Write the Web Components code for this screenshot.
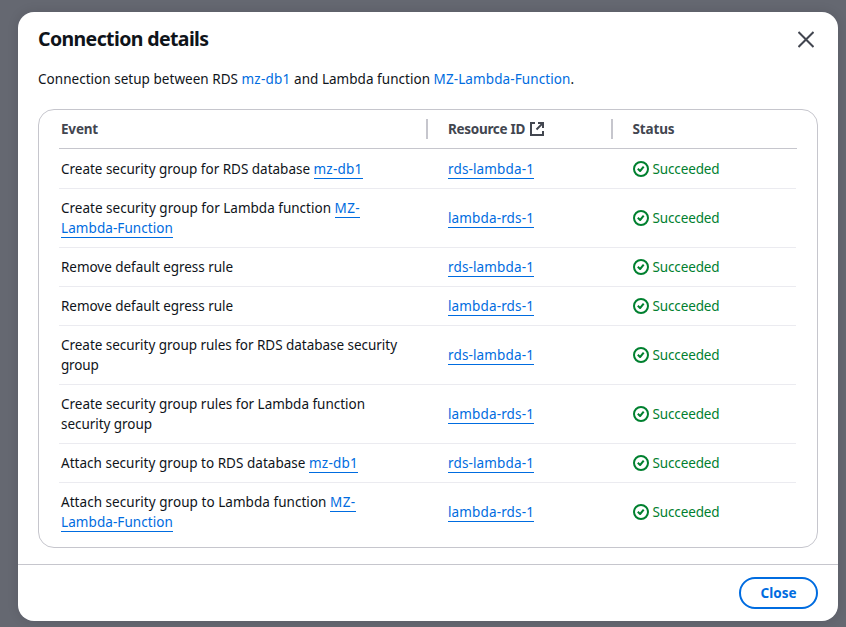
<!DOCTYPE html>
<html lang="en">
<head>
<meta charset="utf-8">
<title>Connection details</title>
<style>
html,body{margin:0;height:100%;overflow:hidden}
body{background:#656871;font:13.5px/20px "Noto Sans","Open Sans",sans-serif;color:#0f141a}
</style>
</head>
<body>
<connection-dialog></connection-dialog>
<script>
// A run of text whose tracking is adjusted to fill the given advance width.
class FitText extends HTMLElement {
  connectedCallback() {
    const root = this.attachShadow({mode:'open'});
    root.innerHTML = `<style>:host{display:inline-block;white-space:pre;line-height:inherit}:host([link]){color:#006ce0}:host([underline]) span{box-shadow:0 1px 0 #006ce0}span{display:inline-block;height:19px;line-height:20px}:host([plain]) span{height:auto;line-height:inherit}</style><span><slot></slot></span>`;
    const w = parseFloat(this.getAttribute('w'));
    const natural = this.getBoundingClientRect().width;
    if (w) this.style.letterSpacing = ((w - natural) / this.textContent.length) + 'px';
  }
}
class StatusOk extends HTMLElement {
  connectedCallback() {
    this.attachShadow({mode:'open'}).innerHTML = `<style>:host{display:flex;align-items:center;gap:3.5px;color:#00802f}svg{display:block;flex:none}</style>
    <svg width="16" height="16" viewBox="0 0 16 16" fill="none" stroke="currentColor" stroke-width="2"><circle cx="8" cy="8" r="7"/><path d="m4.8 7.8 2.3 2.2 3.6-4.4" stroke-linejoin="round" stroke-linecap="butt" stroke-width="2"/></svg><fit-text w="67" plain>Succeeded</fit-text>`;
  }
}
class EventRow extends HTMLElement {
  connectedCallback() {
    const id = this.getAttribute('resource');
    this.attachShadow({mode:'open'}).innerHTML = `<style>
    :host{display:grid;grid-template-columns:387px 184px 1fr;align-items:center;box-sizing:border-box;height:39px;margin:0 1px 0 0;padding-left:2px;border-bottom:1px solid #ebebf0}
    :host([tall]){height:59px}:host([first]){height:40px;padding-top:1px}:host([last]){border-bottom-color:transparent}
    .lines{display:flex;flex-direction:column}::slotted(div){height:20px;white-space:pre}
    status-ok{margin-left:1px}
    </style><div class="lines"><slot></slot></div><fit-text w="86" link underline style="justify-self:start">${id}</fit-text><status-ok></status-ok>`;
  }
}
class TableHead extends HTMLElement {
  connectedCallback() {
    this.attachShadow({mode:'open'}).innerHTML = `<style>
    :host{display:grid;grid-template-columns:367px 185px 1fr;align-items:center;box-sizing:border-box;height:39px;border-bottom:1px solid #c6c6cd;color:#424650;font-weight:700}
    div{display:flex;align-items:center;height:20px;box-sizing:border-box;padding-left:19.5px}
    div+div{border-left:2px solid #c6c6cd}.event{padding-left:2px}
    .res{padding-left:20px}.res fit-text{margin-top:-1px}svg{margin-left:4px;display:block}
    </style><div class="event"><fit-text w="37" plain>Event</fit-text></div><div class="res"><fit-text w="77" plain>Resource ID</fit-text><svg width="16" height="16" viewBox="0 0 16 16" fill="none" stroke="currentColor" stroke-width="2"><path d="M6 2H2v12h12v-4"/><path d="M9 2h5v5M13.6 2.4 7.5 8.5"/></svg></div><div><fit-text w="42" plain>Status</fit-text></div>`;
  }
}
class CloseButton extends HTMLElement {
  connectedCallback() {
    this.attachShadow({mode:'open'}).innerHTML = `<style>:host{display:block}button{display:flex;align-items:center;justify-content:center;width:79px;height:32px;padding:0;border:2px solid #006ce0;border-radius:16px;background:#fff;color:#006ce0;font:700 13.5px/20px "Noto Sans",sans-serif}</style><button><fit-text w="36" plain>Close</fit-text></button>`;
  }
}
class ConnectionDialog extends HTMLElement {
  connectedCallback() {
    this.attachShadow({mode:'open'}).innerHTML = `<style>
    :host{display:block;height:100%;padding:12px 8px 6px 18px;box-sizing:border-box}
    section{height:609px;box-sizing:border-box;background:#fff;border-radius:16px;display:flex;flex-direction:column;box-shadow:0 0 12px rgba(15,20,26,.12)}
    header{display:flex;justify-content:space-between;align-items:flex-start;padding:15px 24px 0 20px;height:57px;box-sizing:border-box}
    h1{margin:0;font-size:19.5px;line-height:24px}header svg{margin-top:4px}
    p{margin:0 20px;height:20px;white-space:pre}
    .box{margin:20px 20px 0;padding:0 20px;height:439px;box-sizing:border-box;border:1px solid #c6c6cd;border-radius:16px}
    footer{margin-top:16px;border-top:1px solid #c6c6cd;padding:12px 20px;display:flex;justify-content:flex-end}
    </style>
    <section>
    <header><h1><fit-text w="170.5" plain>Connection details</fit-text></h1><svg width="16" height="17" viewBox="0 0 16 17" fill="none" stroke="#424650" stroke-width="2"><path d="m.5 1 15 15M15.5 1l-15 15"/></svg></header>
    <p><fit-text w="200">Connection setup between RDS</fit-text> <fit-text w="49" link>mz-db1</fit-text> <fit-text w="136">and Lambda function</fit-text> <fit-text w="137" link>MZ-Lambda-Function</fit-text>.</p>
    <div class="box"><table-head></table-head>
    <event-row first resource="rds-lambda-1"><div><fit-text w="249">Create security group for RDS database</fit-text> <fit-text w="49" link underline>mz-db1</fit-text></div></event-row>
    <event-row tall resource="lambda-rds-1"><div><fit-text w="270">Create security group for Lambda function</fit-text> <fit-text w="25.5" link underline>MZ-</fit-text></div><div><fit-text w="112" link underline>Lambda-Function</fit-text></div></event-row>
    <event-row resource="rds-lambda-1"><div><fit-text w="172">Remove default egress rule</fit-text></div></event-row>
    <event-row resource="lambda-rds-1"><div><fit-text w="172">Remove default egress rule</fit-text></div></event-row>
    <event-row tall resource="rds-lambda-1"><div><fit-text w="336">Create security group rules for RDS database security</fit-text></div><div><fit-text w="37.5">group</fit-text></div></event-row>
    <event-row tall resource="lambda-rds-1"><div><fit-text w="304">Create security group rules for Lambda function</fit-text></div><div><fit-text w="91">security group</fit-text></div></event-row>
    <event-row resource="rds-lambda-1"><div><fit-text w="244.5">Attach security group to RDS database</fit-text> <fit-text w="49" link underline>mz-db1</fit-text></div></event-row>
    <event-row tall last resource="lambda-rds-1"><div><fit-text w="265.5">Attach security group to Lambda function</fit-text> <fit-text w="25.5" link underline>MZ-</fit-text></div><div><fit-text w="112" link underline>Lambda-Function</fit-text></div></event-row>
    </div>
    <footer><close-button></close-button></footer>
    </section>`;
  }
}
customElements.define('fit-text', FitText);
customElements.define('status-ok', StatusOk);
customElements.define('event-row', EventRow);
customElements.define('table-head', TableHead);
customElements.define('close-button', CloseButton);
customElements.define('connection-dialog', ConnectionDialog);
</script>
</body>
</html>
